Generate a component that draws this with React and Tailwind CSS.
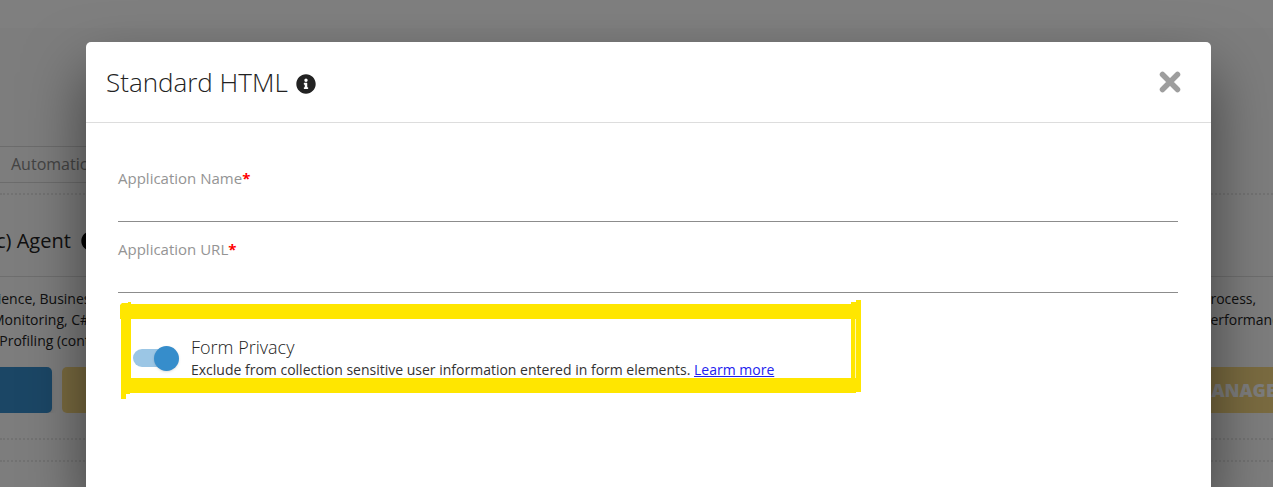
import { useState } from 'react';
import { FaInfoCircle } from 'react-icons/fa';

function PageBehind() {
  return (
    <div aria-hidden="true" className="h-full w-full bg-[#fafafa] text-[#222]">
      <div className="h-7 bg-white" />
      <div className="h-[118px]" />
      <div className="flex h-[37px] w-1/2 items-center border-y border-[#d8d8d8] pb-0.5 pl-[11px]">
        <span className="text-base text-[#888]">Automatic</span>
      </div>
      <div className="h-3 border-b-2 border-dotted border-[#e4e4e4]" />
      <div className="flex h-[82px] items-center overflow-hidden border-b border-[#dcdcdc] pt-2.5">
        <div className="-ml-1 flex items-center gap-2.5">
          <h2 className="text-xl">c) Agent</h2>
          <FaInfoCircle className="size-5 text-black" />
        </div>
      </div>
      <div className="flex justify-between overflow-hidden pt-[11px]">
        <div className="-ml-2">
          <p className="h-[79px] text-sm leading-[21px]">
            rience, Business<br />
            Monitoring, C#<br />
            &nbsp;&nbsp;Profiling (cont
          </p>
          <div className="flex gap-2.5">
            <span className="h-[46px] w-[60px] rounded-r-[5px] bg-[#368dcb] shadow-md" />
            <span className="h-[46px] w-20 rounded-[5px] bg-[#f5d680]" />
          </div>
        </div>
        <div className="w-[71px]">
          <p className="h-[79px] text-sm leading-[21px]">
            Process,<br />
            Performance
          </p>
          <span className="-ml-2 flex h-[46px] items-center bg-[#f5d680] text-lg font-extrabold text-[#fafafa]">MANAGE</span>
        </div>
      </div>
      <div className="h-[27px] border-b-2 border-dotted border-[#e4e4e4]" />
      <div className="h-[22px] border-b-2 border-dotted border-[#e4e4e4]" />
    </div>
  );
}

function TextField({ id, label, value, onChange }) {
  return (
    <div className="flex flex-col">
      <label htmlFor={id} className="text-[15px] leading-6 text-[#949494]">
        {label}
        <span className="font-bold text-[#f00]">*</span>
      </label>
      <input
        id={id}
        type="text"
        required
        value={value}
        onChange={(e) => onChange(e.target.value)}
        className="h-8 border-b border-[#8c8c8c] bg-transparent text-[15px] outline-none"
      />
    </div>
  );
}

function Highlight() {
  return (
    <svg
      className="pointer-events-none absolute top-0 left-0 h-[100px] w-[744px]"
      viewBox="0 0 744 100"
      fill="#ffe600"
      aria-hidden="true"
    >
      <path d="M2 5 4 3h6V2h3v2h720V2h5V0h5v92h-5v1H12v1H8v5H3V19H2z M13 19v59h720V19z" fillRule="evenodd" />
      <path d="M737.5 19v59" stroke="#fff7a8" />
    </svg>
  );
}

export default function App() {
  const [name, setName] = useState('');
  const [url, setUrl] = useState('');
  const [privacy, setPrivacy] = useState(true);
  const [open, setOpen] = useState(true);

  return (
    <div className="relative h-screen w-full overflow-hidden font-['Open_Sans',sans-serif]">
      <PageBehind />
      {open && (
        <div className="absolute inset-0 flex bg-black/50 pt-[42px] pr-[62px] pl-[86px]">
          <div
            role="dialog"
            aria-labelledby="dialog-title"
            className="flex-1 rounded-t-[5px] bg-white shadow-[0_30px_60px_rgba(0,0,0,0.5)]"
          >
            <header className="flex h-[81px] items-center justify-between border-b border-[#ddd] pr-[30px] pl-5">
              <div className="flex items-center gap-2">
                <h1 id="dialog-title" className="text-[26px] font-light text-[#222]">Standard HTML</h1>
                <FaInfoCircle className="mt-1 size-5 text-[#222]" />
              </div>
              <button type="button" aria-label="Close" onClick={() => setOpen(false)}>
                <svg viewBox="0 0 22 22" className="size-[22px]" stroke="#9e9e9e" strokeWidth="5.5" strokeLinecap="round">
                  <path d="M3.5 3.5l15 15M18.5 3.5l-15 15" />
                </svg>
              </button>
            </header>

            <form className="flex flex-col gap-[15px] pt-[43px] pr-[33px] pl-8">
              <TextField id="app-name" label="Application Name" value={name} onChange={setName} />
              <TextField id="app-url" label="Application URL" value={url} onChange={setUrl} />
              <div className="relative -mt-2 flex items-center gap-4 pt-[35px] pl-[15px]">
                <input
                  id="form-privacy"
                  type="checkbox"
                  role="switch"
                  checked={privacy}
                  onChange={(e) => setPrivacy(e.target.checked)}
                  className="flex h-[18px] w-[42px] appearance-none items-center rounded-full bg-[#ccc] before:size-[25px] before:shrink-0 before:rounded-full before:bg-[#eee] before:shadow checked:bg-[#9bc6e5] checked:before:ml-[21px] checked:before:bg-[#368dcb]"
                />
                <div className="text-[#333]">
                  <label htmlFor="form-privacy" className="block text-lg leading-6 font-light text-[#222]">Form Privacy</label>
                  <p className="text-sm leading-[22px]">
                    Exclude from collection sensitive user information entered in form elements.{' '}
                    <a href="#learn" className="text-[#22e] underline">Learm more</a>
                  </p>
                </div>
                <Highlight />
              </div>
            </form>
          </div>
        </div>
      )}
    </div>
  );
}
